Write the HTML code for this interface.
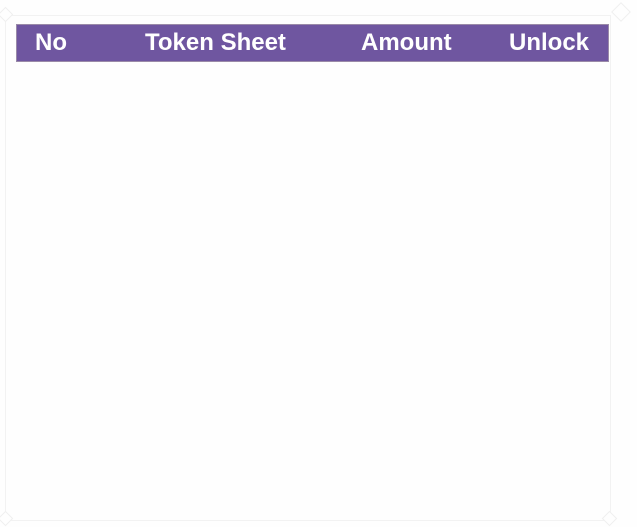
<!DOCTYPE html>
<html><head><meta charset="utf-8"><style>
html,body{margin:0;padding:0;background:#fefefe;width:637px;height:527px;overflow:hidden;position:relative;font-family:"Liberation Sans",sans-serif}
.frame{position:absolute;left:5px;top:15px;width:604px;height:504px;border:1px solid #f2f2f2}
.dia{position:absolute;width:9px;height:9px;border:1px solid #efefef;transform:rotate(45deg);background:#fefefe}
.bar{position:absolute;left:16px;top:24px;width:591px;height:36px;background:#6f56a0;border:1px solid #9a8aa8}
.bar span{position:absolute;top:4px;color:#fff;font-weight:bold;font-size:24px;line-height:28px}
</style></head><body>
<div class="frame"></div>
<div class="dia" style="left:0px;top:9px"></div>
<div class="dia" style="left:614px;top:5px;width:12px;height:12px"></div>
<div class="dia" style="left:0px;top:513px"></div>
<div class="dia" style="left:604px;top:513px"></div>
<div class="bar">
<span style="left:18px">No</span>
<span style="left:128px">Token Sheet</span>
<span style="left:344px">Amount</span>
<span style="left:492px">Unlock</span>
</div>
</body></html>
